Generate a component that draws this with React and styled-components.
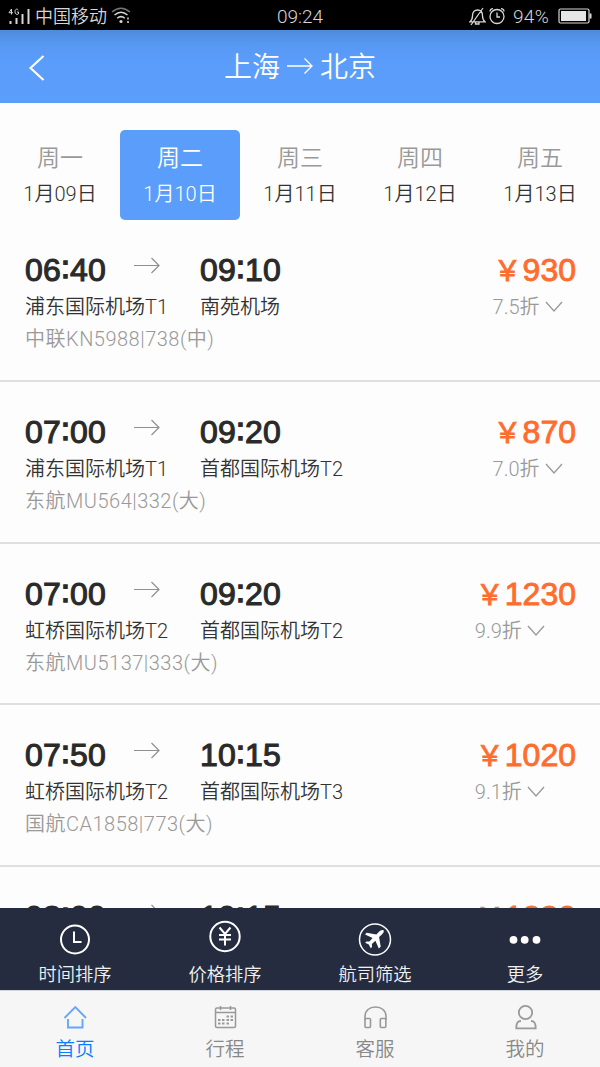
import React from "react";
import styled, { createGlobalStyle } from "styled-components";

const Global = createGlobalStyle`
  * { box-sizing: border-box; }
  html, body { margin: 0; padding: 0; }
  body { background: #fdfdfd; font-family: Roboto, "Noto Sans CJK SC", sans-serif; font-weight: 350; }
  svg { display: block; fill: none; stroke: currentColor; flex: none; }
`;

const Screen = styled.div`
  width: 600px;
  height: 1067px;
  display: flex;
  flex-direction: column;
  overflow: hidden;
  background: #fdfdfd;
`;

const StatusBar = styled.div`
  flex: none;
  height: 30px;
  background: #000;
  color: #d6d6d6;
  display: grid;
  grid-template-columns: 1fr auto 1fr;
  align-items: center;
  padding: 0 8px;
  font-size: 18px;
  line-height: 30px;
`;

const StatusGroup = styled.div`
  display: flex;
  align-items: center;
  justify-content: ${(p) => (p.$end ? "flex-end" : "flex-start")};
  height: 30px;
`;

const Carrier = styled.span`
  margin: 1px 4px 0 4px;
`;

const Clock = styled.span`
  padding-top: 2px;
  font-size: 19px;
`;

const AlarmSlot = styled.span`
  margin-left: 3px;
`;

const Percent = styled.span`
  margin: 1px 9px 0 8px;
  font-size: 19px;
  letter-spacing: 0.3px;
`;

const Header = styled.header`
  flex: none;
  height: 73px;
  display: grid;
  grid-template-columns: 60px 1fr 60px;
  align-items: center;
  color: #fff;
  background: linear-gradient(#4f8bdc, #5698f2 14px, #5b9dfb 34px);
`;

const BackButton = styled.button`
  border: 0;
  padding: 2px 0 0 28px;
  background: none;
  color: inherit;
`;

const Route = styled.h1`
  margin: 0;
  display: flex;
  align-items: center;
  justify-content: center;
  gap: 7px;
  font-size: 28px;
  font-weight: 350;
  line-height: 40px;
`;

const City = styled.span`
  padding-top: 3px;
`;

const Days = styled.nav`
  flex: none;
  display: grid;
  grid-template-columns: repeat(5, 120px);
  padding-top: 27px;
`;

const Day = styled.div`
  height: 90px;
  padding-top: 12px;
  border-radius: 5px;
  text-align: center;
  background: ${(p) => (p.$active ? "#5b9dfb" : "transparent")};
  color: ${(p) => (p.$active ? "#fff" : "#333")};
`;

const Weekday = styled.div`
  height: 33px;
  line-height: 33px;
  font-size: 23px;
  color: ${(p) => (p.$active ? "#fff" : "#999")};
`;

const DateText = styled.div`
  padding-top: 4px;
  font-size: 20px;
  line-height: 30px;
`;

const Flights = styled.main`
  flex: 1;
  min-height: 0;
  overflow: hidden;
`;

const FlightRow = styled.article`
  height: 161.75px;
  padding: 30px 24px 0 25px;
  border-bottom: 2px solid #dfdfdf;
  display: grid;
  grid-template-columns: 109px 66px 1fr auto;
  grid-template-rows: 39px 36px 30px;
`;

const Time = styled.div`
  padding-top: 1px;
  font-family: "Liberation Sans", sans-serif;
  font-size: 32px;
  font-weight: 400;
  -webkit-text-stroke: 1.1px currentColor;
  letter-spacing: 0.2px;
  line-height: 38px;
  color: #2a2a2a;
`;

const Colon = styled.span`
  vertical-align: 3px;
  line-height: 1;
  -webkit-text-stroke-width: 1.500px;
`;

const ArrowCell = styled.div`
  padding-top: 7px;
  color: #8f8f8f;
`;

const Price = styled.div`
  padding-top: 1px;
  font-family: "Liberation Sans", "Noto Sans CJK SC", sans-serif;
  font-size: 32px;
  font-weight: 400;
  -webkit-text-stroke: 0.9px currentColor;
  line-height: 38px;
  text-align: right;
  color: #ff6d2e;
`;

const Currency = styled.span`
  margin: 0 1px 0 3px;
  font-size: 28px;
  line-height: 1;
`;

const Airport = styled.div`
  grid-column: ${(p) => (p.$arrival ? "3" : "1 / 3")};
  grid-row: 2;
  font-size: 20px;
  line-height: 36px;
  color: #333;
  white-space: nowrap;
`;

const Discount = styled.div`
  grid-column: 4;
  grid-row: 2;
  display: flex;
  justify-content: flex-start;
  align-items: center;
  gap: 5px;
  padding-left: 2px;
  font-size: 20px;
  line-height: 36px;
  color: #999;
`;

const FlightNo = styled.div`
  grid-column: 1 / 5;
  font-size: 20px;
  line-height: 28px;
  letter-spacing: 0.5px;
  color: #999;
`;

const SortBar = styled.div`
  flex: none;
  height: 82px;
  display: grid;
  grid-template-columns: repeat(4, 1fr);
  background: #262c3f;
  color: #fff;
`;

const SortItem = styled.div`
  display: flex;
  flex-direction: column;
  align-items: center;
  padding-top: ${(p) => (p.$raised ? 11 : 14)}px;
`;

const SortLabel = styled.span`
  margin-top: ${(p) => (p.$raised ? 7 : 4)}px;
  font-size: 18.3px;
  line-height: 29px;
  color: #f0f0f2;
`;

const TabBar = styled.nav`
  flex: none;
  height: 77px;
  display: grid;
  grid-template-columns: repeat(4, 1fr);
  border-top: 1px solid #d4d5d8;
  background: #f6f6f6;
`;

const Tab = styled.div`
  display: flex;
  flex-direction: column;
  align-items: center;
  padding-top: 12px;
  color: ${(p) => (p.$active ? "#67a5fb" : "#999")};
`;

const TabLabel = styled.span`
  margin-top: 4px;
  font-size: 19.5px;
  line-height: 30px;
  color: ${(p) => (p.$active ? "#087dff" : "#888")};
`;

const SignalIcon = () => (
  <svg width="23" height="20" viewBox="0 0 23 20" strokeWidth="2">
    <path d="M2.500 18v-3M8.500 18v-6M14.500 18V8M20.500 18V3" />
    <g strokeWidth="1">
      <path d="M3.500 8.500V3L1 6.700h4M10.300 4C8.800 2.300 7 3.300 7 5.700c0 2.600 2 3.300 3.500 2.200V6H9" />
    </g>
  </svg>
);

const WifiIcon = () => (
  <svg width="21" height="18" viewBox="0 0 21 18" strokeWidth="1.500">
    <path d="M1 5Q10 -2.500 19 5" opacity=".55" />
    <path d="M3.500 8Q10 2.500 16.500 8M6.200 11.300Q10 8 13.800 11.300" />
    <circle cx="10" cy="14.500" r="1.600" fill="currentColor" stroke="none" />
    <path d="M17 10.500v2M17 14v2" strokeWidth="2" opacity=".75" />
  </svg>
);

const MuteIcon = () => (
  <svg width="17" height="19" viewBox="0 0 17 19" strokeWidth="1.300">
    <path d="M1 14.800c2.500-2 2.500-3.500 2.500-6C3.500 5 5.500 3 8.500 3s5 2 5 5.800c0 2.500 0 4 2.500 6zM6.500 15v2h3.500v-2M2 18L14 1" />
  </svg>
);

const AlarmIcon = () => (
  <svg width="16" height="18" viewBox="0 0 16 18" strokeWidth="1.300">
    <circle cx="8" cy="9.500" r="7" />
    <path d="M8 5.500v4.500h3M1 4.500Q1 1.700 4 1.700M15 4.500q0-2.800-3-2.800" />
  </svg>
);

const BatteryIcon = () => (
  <svg width="34" height="16" viewBox="0 0 34 16" strokeWidth="1.200">
    <rect x="1" y="1" width="30" height="14" rx="1.500" />
    <rect x="3" y="3" width="25" height="10" fill="#e5e5e5" stroke="none" />
    <path d="M32.500 5.500v5" strokeWidth="2" />
  </svg>
);

const BackIcon = () => (
  <svg width="18" height="26" viewBox="0 0 18 26" strokeWidth="2.200">
    <path d="M15.500 1L2.500 13l13 12" />
  </svg>
);

const RouteArrow = () => (
  <svg width="26" height="18" viewBox="0 0 26 18" strokeWidth="1.300">
    <path d="M0 8h25M17.500 .5L25 8l-7.500 7.500" />
  </svg>
);

const FlightArrow = () => (
  <svg width="26" height="17" viewBox="0 0 26 17" strokeWidth="1.200">
    <path d="M0 8.500h25M17.500 1L25 8.500l-7.500 7.500" />
  </svg>
);

const ChevronIcon = () => (
  <svg width="18" height="12" viewBox="0 0 18 12" strokeWidth="1.300">
    <path d="M1 1l8 9 8-9" />
  </svg>
);

const TimeIcon = () => (
  <svg width="32" height="34" viewBox="0 0 32 34" strokeWidth="2">
    <circle cx="16" cy="17.500" r="14" />
    <path d="M15 9.500v10.500h7.500" />
  </svg>
);

const YenIcon = () => (
  <svg width="32" height="34" viewBox="0 0 32 34" strokeWidth="2">
    <circle cx="16" cy="17.500" r="14.700" />
    <path d="M10.500 8.500L16 15l5.500-6.500M16 15v11.500M10 16h12M10 20.500h12" />
  </svg>
);

const PlaneIcon = () => (
  <svg width="34" height="34" viewBox="0 0 34 34" strokeWidth="1.500">
    <circle cx="17" cy="17.500" r="15.500" />
    <path
      d="M25.500 8.300c-1.300-.8-3 0-4.500 1.500l-2.600 2.600-9.700-1.600-1.700 1.800 7.600 3.500-3.200 3.500-3-.2-1.200 1.300 3.600 1.900 1.900 3.700 1.300-1.300-.1-3 3.500-3.200 3.400 7.700 1.900-1.800-1.600-9.600 2.800-2.600c1.500-1.500 2.500-3.200 1.600-4.200z"
      fill="currentColor"
      stroke="none"
    />
  </svg>
);

const MoreIcon = () => (
  <svg width="32" height="34" viewBox="0 0 32 34">
    <g fill="currentColor" stroke="none">
      <circle cx="4.500" cy="17.800" r="3.900" />
      <circle cx="15.700" cy="17.800" r="3.900" />
      <circle cx="27.500" cy="17.800" r="3.900" />
    </g>
  </svg>
);

const HomeIcon = () => (
  <svg width="24" height="28" viewBox="0 0 24 28" strokeWidth="1.900">
    <path d="M1.500 15L12.300 4 23 15M5 16v8.500h14.500V16" />
  </svg>
);

const CalendarIcon = () => (
  <svg width="24" height="28" viewBox="0 0 24 28" strokeWidth="1.500">
    <rect x="2.500" y="5" width="20" height="19.500" rx="1.500" />
    <path d="M2.500 9.500h20M7.500 3v4M17.500 3v4" />
    <path d="M13.500 13.500h2.500M17.500 13.500H20M5 17h2.500M9 17h2.500M13.500 17H16M17.500 17H20M5 20.500h2.500M9 20.500h2.500M13.500 20.500H16" strokeWidth="2.200" />
  </svg>
);

const HeadphonesIcon = () => (
  <svg width="24" height="28" viewBox="0 0 24 28" strokeWidth="1.600">
    <path d="M2 17v-3.500C2 7.500 6.500 4 12.500 4S23 7.500 23 13.500V17" />
    <rect x="2" y="15.500" width="5.500" height="9" rx="1" />
    <rect x="17.300" y="15.500" width="5.500" height="9" rx="1" />
  </svg>
);

const UserIcon = () => (
  <svg width="24" height="28" viewBox="0 0 24 28" strokeWidth="1.800">
    <circle cx="12.500" cy="9.500" r="6.700" />
    <path d="M8 18c-3.500 0-4.700 2-4.700 7.300h19.400C22.700 20 21.500 18 18 18" />
  </svg>
);

const ClockTime = ({ value }) => {
  const [hours, minutes] = value.split(":");
  return (
    <Time>
      {hours}<Colon>:</Colon>{minutes}
    </Time>
  );
};

const days = [
  ["周一", "1月09日"],
  ["周二", "1月10日"],
  ["周三", "1月11日"],
  ["周四", "1月12日"],
  ["周五", "1月13日"],
];

const flights = [
  { dep: "06:40", arr: "09:10", from: "浦东国际机场T1", to: "南苑机场", no: "中联KN5988|738(中)", price: "930", off: "7.5折" },
  { dep: "07:00", arr: "09:20", from: "浦东国际机场T1", to: "首都国际机场T2", no: "东航MU564|332(大)", price: "870", off: "7.0折" },
  { dep: "07:00", arr: "09:20", from: "虹桥国际机场T2", to: "首都国际机场T2", no: "东航MU5137|333(大)", price: "1230", off: "9.9折" },
  { dep: "07:50", arr: "10:15", from: "虹桥国际机场T2", to: "首都国际机场T3", no: "国航CA1858|773(大)", price: "1020", off: "9.1折" },
  { dep: "08:00", arr: "10:15", price: "1230" },
];

const sorts = [
  { label: "时间排序", Icon: TimeIcon },
  { label: "价格排序", Icon: YenIcon, raised: true },
  { label: "航司筛选", Icon: PlaneIcon },
  { label: "更多", Icon: MoreIcon },
];

const tabs = [
  { label: "首页", Icon: HomeIcon, active: true },
  { label: "行程", Icon: CalendarIcon },
  { label: "客服", Icon: HeadphonesIcon },
  { label: "我的", Icon: UserIcon },
];

export default function App() {
  return (
    <Screen>
      <Global />
      <StatusBar>
        <StatusGroup>
          <SignalIcon />
          <Carrier>中国移动</Carrier>
          <WifiIcon />
        </StatusGroup>
        <Clock>09:24</Clock>
        <StatusGroup $end>
          <MuteIcon />
          <AlarmSlot><AlarmIcon /></AlarmSlot>
          <Percent>94%</Percent>
          <BatteryIcon />
        </StatusGroup>
      </StatusBar>
      <Header>
        <BackButton aria-label="返回"><BackIcon /></BackButton>
        <Route>
          <City>上海</City>
          <RouteArrow />
          <City>北京</City>
        </Route>
      </Header>
      <Days>
        {days.map(([week, date], i) => (
          <Day key={week} $active={i === 1}>
            <Weekday $active={i === 1}>{week}</Weekday>
            <DateText>{date}</DateText>
          </Day>
        ))}
      </Days>
      <Flights>
        {flights.map((f, i) => (
          <FlightRow key={i}>
            <ClockTime value={f.dep} />
            <ArrowCell><FlightArrow /></ArrowCell>
            <ClockTime value={f.arr} />
            <Price><Currency>￥</Currency>{f.price}</Price>
            {f.no && (
              <>
                <Airport>{f.from}</Airport>
                <Airport $arrival>{f.to}</Airport>
                <Discount>{f.off}<ChevronIcon /></Discount>
                <FlightNo>{f.no}</FlightNo>
              </>
            )}
          </FlightRow>
        ))}
      </Flights>
      <SortBar>
        {sorts.map(({ label, Icon, raised }) => (
          <SortItem key={label} $raised={raised}>
            <Icon />
            <SortLabel $raised={raised}>{label}</SortLabel>
          </SortItem>
        ))}
      </SortBar>
      <TabBar>
        {tabs.map(({ label, Icon, active }) => (
          <Tab key={label} $active={active}>
            <Icon />
            <TabLabel $active={active}>{label}</TabLabel>
          </Tab>
        ))}
      </TabBar>
    </Screen>
  );
}
